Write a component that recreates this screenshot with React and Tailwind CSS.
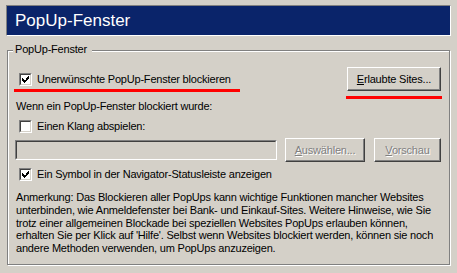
import React from "react";

const FONT = { fontFamily: '"Liberation Sans", Arial, sans-serif' };

function CheckBox({ checked }) {
  return (
    <div className="h-[13px] w-[13px] shrink-0 border border-t-[#808080] border-l-[#808080] border-r-white border-b-white">
      <div className="flex h-full w-full items-center justify-center border border-t-[#404040] border-l-[#404040] border-r-[#d4d0c8] border-b-[#d4d0c8] bg-white">
        {checked && (
          <svg width="7" height="7" viewBox="0 0 7 7" shapeRendering="crispEdges">
            <path d="M6 0h1v3h-1zM5 1h1v3h-1zM4 2h1v3h-1zM0 2h1v3h-1zM1 3h1v3h-1zM2 4h1v3h-1zM3 4h1v2h-1z" fill="#000" />
          </svg>
        )}
      </div>
    </div>
  );
}

function Button({ children, disabled, className }) {
  return (
    <div
      className={
        "flex h-[24px] items-center justify-center border border-t-white border-l-white border-r-[#404040] border-b-[#404040] shadow-[inset_-1px_-1px_0_#808080] " +
        (disabled ? "text-[#808080] [text-shadow:1px_1px_0_#fff] " : "text-black ") +
        className
      }
    >
      {children}
    </div>
  );
}

export default function App() {
  return (
    <div className="relative h-[273px] w-[457px] overflow-hidden bg-[#d4d0c8] pt-[5px] text-[11px] tracking-[-0.2px] text-black" style={FONT}>
      <div className="ml-[6px] flex h-[31px] w-[445px] items-center border border-t-[#808080] border-l-[#808080] border-r-white border-b-white bg-[#0a246a] pl-[8px] text-[17px] tracking-normal text-white">
        PopUp-Fenster
      </div>

      <div className="relative ml-[7px] mt-[14px] h-[215px] w-[443px] border border-[#808080] shadow-[inset_1px_1px_0_#fff,1px_1px_0_#fff]">
        <span className="absolute left-[5px] top-[-8px] bg-[#d4d0c8] pl-[2px] pr-[5px] leading-[13px]">PopUp-Fenster</span>

        <div className="flex h-[24px] items-center justify-between pl-[11px] pr-[8px] mt-[16px]">
          <div className="flex items-center gap-[5px]">
            <CheckBox checked />
            <span>Unerwünschte PopUp-Fenster blockieren</span>
          </div>
          <Button className="w-[94px]">
            <span>
              <u className="underline-offset-1">E</u>rlaubte Sites...
            </span>
          </Button>
        </div>

        <div className="mt-[9px] pl-[8px] leading-[13px]">Wenn ein PopUp-Fenster blockiert wurde:</div>

        <div className="mt-[7px] flex items-center gap-[5px] pl-[11px] leading-[13px]">
          <CheckBox />
          <span>Einen Klang abspielen:</span>
        </div>

        <div className="mt-[5px] flex h-[24px] items-center pl-[7px]">
          <div className="h-[20px] w-[262px] border border-t-[#808080] border-l-[#808080] border-r-white border-b-white">
            <div className="h-full w-full border border-t-[#404040] border-l-[#404040] border-r-[#d4d0c8] border-b-[#d4d0c8] bg-[#d4d0c8]" />
          </div>
          <Button disabled className="ml-[8px] w-[80px]">
            <span>
              <u className="underline-offset-1">A</u>uswählen...
            </span>
          </Button>
          <Button disabled className="ml-[9px] w-[67px]">
            <span>
              <u className="underline-offset-1">V</u>orschau
            </span>
          </Button>
        </div>

        <div className="mt-[6px] flex items-center gap-[5px] pl-[11px] leading-[13px]">
          <CheckBox checked />
          <span>Ein Symbol in der Navigator-Statusleiste anzeigen</span>
        </div>

        <div className="mt-[10px] whitespace-nowrap pl-[8px] leading-[12.75px]">
          <div>Anmerkung: Das Blockieren aller PopUps kann wichtige Funktionen mancher Websites</div>
          <div>unterbinden, wie Anmeldefenster bei Bank- und Einkauf-Sites. Weitere Hinweise, wie Sie</div>
          <div>trotz einer allgemeinen Blockade bei speziellen Websites PopUps erlauben können,</div>
          <div>erhalten Sie per Klick auf 'Hilfe'. Selbst wenn Websites blockiert werden, können sie noch</div>
          <div>andere Methoden verwenden, um PopUps anzuzeigen.</div>
        </div>
      </div>

      <div className="absolute left-[14px] top-[89px] h-[3px] w-[226px] bg-[#ff0000]" />
      <div className="absolute left-[346px] top-[96px] h-[3px] w-[96px] bg-[#ff0000]" />
    </div>
  );
}
